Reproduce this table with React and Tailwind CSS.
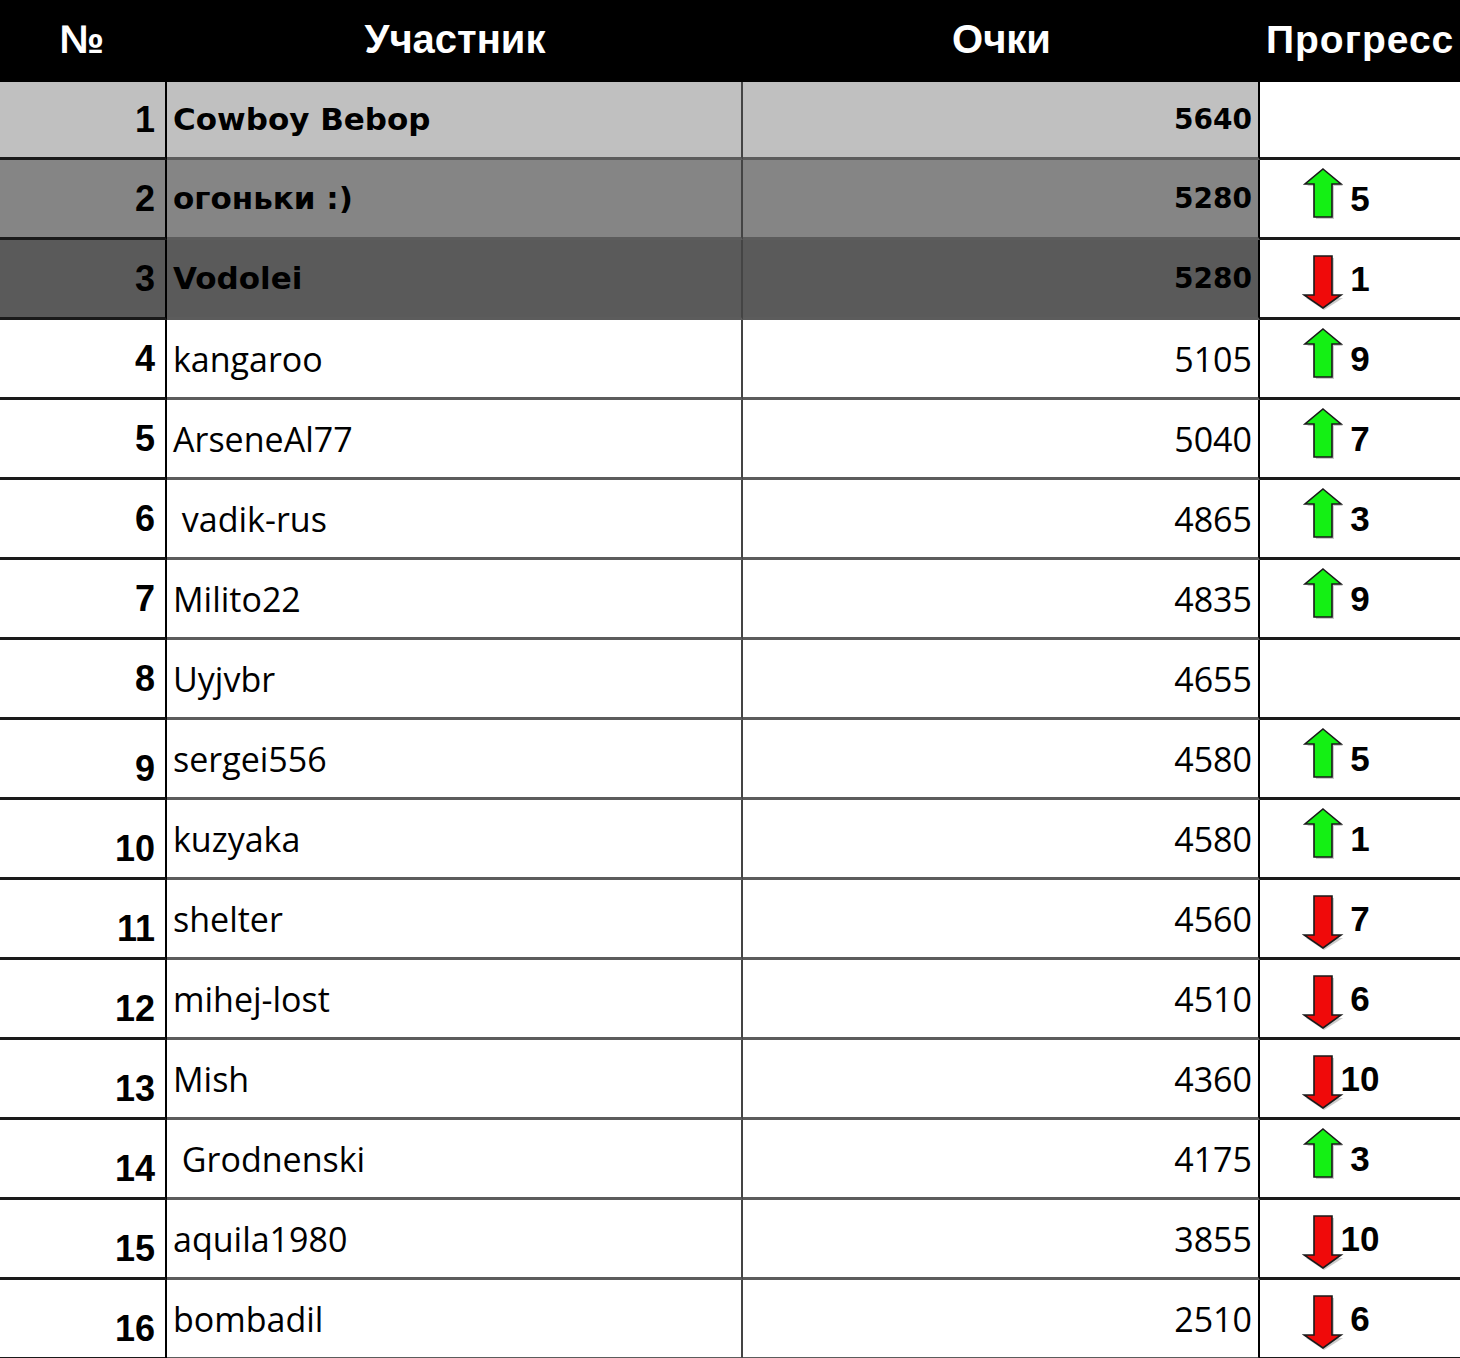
import React from 'react'

const rows = [
  { n: 1, name: 'Cowboy Bebop', pts: 5640, top: 'bg-[#c0c0c0]' },
  { n: 2, name: 'огоньки :)', pts: 5280, top: 'bg-[#858585]', dir: 'up', d: 5 },
  { n: 3, name: 'Vodolei', pts: 5280, top: 'bg-[#5a5a5a]', dir: 'down', d: 1 },
  { n: 4, name: 'kangaroo', pts: 5105, dir: 'up', d: 9 },
  { n: 5, name: 'ArseneAl77', pts: 5040, dir: 'up', d: 7 },
  { n: 6, name: '\u00a0vadik-rus', pts: 4865, dir: 'up', d: 3 },
  { n: 7, name: 'Milito22', pts: 4835, dir: 'up', d: 9 },
  { n: 8, name: 'Uyjvbr', pts: 4655 },
  { n: 9, name: 'sergei556', pts: 4580, dir: 'up', d: 5 },
  { n: 10, name: 'kuzyaka', pts: 4580, dir: 'up', d: 1 },
  { n: 11, name: 'shelter', pts: 4560, dir: 'down', d: 7 },
  { n: 12, name: 'mihej-lost', pts: 4510, dir: 'down', d: 6 },
  { n: 13, name: 'Mish', pts: 4360, dir: 'down', d: 10 },
  { n: 14, name: '\u00a0Grodnenski', pts: 4175, dir: 'up', d: 3 },
  { n: 15, name: 'aquila1980', pts: 3855, dir: 'down', d: 10 },
  { n: 16, name: 'bombadil', pts: 2510, dir: 'down', d: 6 },
]

function UpArrow() {
  return (
    <svg width="42" height="52" viewBox="0 0 42 52" className="mt-[8px]">
      <polygon points="23,3 41,18 32,18 32,51 14,51 14,18 5,18" fill="#9a9a9a" opacity="0.5" />
      <polygon points="21,1 39,16 30,16 30,49 12,49 12,16 3,16" fill="#14f014" stroke="#1a1a1a" strokeWidth="1.6" strokeLinejoin="miter" />
    </svg>
  )
}

function DownArrow() {
  return (
    <svg width="42" height="56" viewBox="0 0 42 56" className="mt-[15px]">
      <polygon points="14,3 32,3 32,43 41,43 22,55 4,43 13,43" fill="#9a9a9a" opacity="0.5" />
      <polygon points="12,1 30,1 30,40 39,40 21,53 2,40 12,40" fill="#f00a0a" stroke="#1a1a1a" strokeWidth="1.6" strokeLinejoin="miter" />
    </svg>
  )
}

export default function App() {
  return (
    <div className="w-[1460px] h-[1358px] overflow-hidden bg-white text-black">
      {/* header */}
      <div className="grid grid-cols-[167px_576px_517px_200px] h-[82px] bg-black text-white font-['Liberation_Sans',Arial,sans-serif] font-bold text-[40px] leading-none">
        <div className="flex items-center justify-center pb-[4px] pr-[4px]">№</div>
        <div className="flex items-center justify-center pb-[4px]">Участник</div>
        <div className="flex items-center justify-center pb-[4px]">Очки</div>
        <div className="flex items-center pl-[6px] pb-[4px] text-[39px] tracking-[1px] whitespace-nowrap">Прогресс</div>
      </div>

      {rows.map((r, i) => {
        const bold = !!r.top
        const bg = r.top || 'bg-white'
        const late = r.n >= 9
        return (
          <div
            key={r.n}
            className={`grid grid-cols-[167px_576px_517px_200px] ${i === 0 ? 'h-[78px]' : 'h-[80px]'}`}
          >
            <div
              className={`${bg} border-r-2 border-b-[3px] border-r-black border-b-[#1a1a1a] flex justify-end pr-[10px] font-['Liberation_Sans',Arial,sans-serif] font-bold text-[36px] leading-none ${late ? 'items-end pb-[10px]' : 'items-center'}`}
            >
              {r.n}
            </div>
            <div
              className={`${bg} border-r-2 border-b-[3px] border-r-[#444444] border-b-[#5c5c5c] flex items-center pl-[6px] whitespace-pre ${bold ? "font-['DejaVu_Sans',sans-serif] font-bold text-[31px]" : "font-['Open_Sans',sans-serif] text-[34px]"} leading-none`}
            >
              {r.name}
            </div>
            <div
              className={`${bg} border-r-2 border-b-[3px] border-r-black border-b-[#5c5c5c] flex items-center justify-end pr-[6px] ${bold ? "font-['DejaVu_Sans',sans-serif] font-bold text-[28px]" : "font-['Open_Sans',sans-serif] text-[34px]"} leading-none`}
            >
              {r.pts}
            </div>
            <div className="bg-white border-b-[3px] border-b-[#1a1a1a] flex items-start pl-[42px]">
              {r.dir === 'up' && <UpArrow />}
              {r.dir === 'down' && <DownArrow />}
              {r.dir && (
                <div className="self-center w-[38px] flex justify-center font-['Liberation_Sans',Arial,sans-serif] font-bold text-[35px] leading-none -ml-[3px]">
                  {r.d}
                </div>
              )}
            </div>
          </div>
        )
      })}
    </div>
  )
}
